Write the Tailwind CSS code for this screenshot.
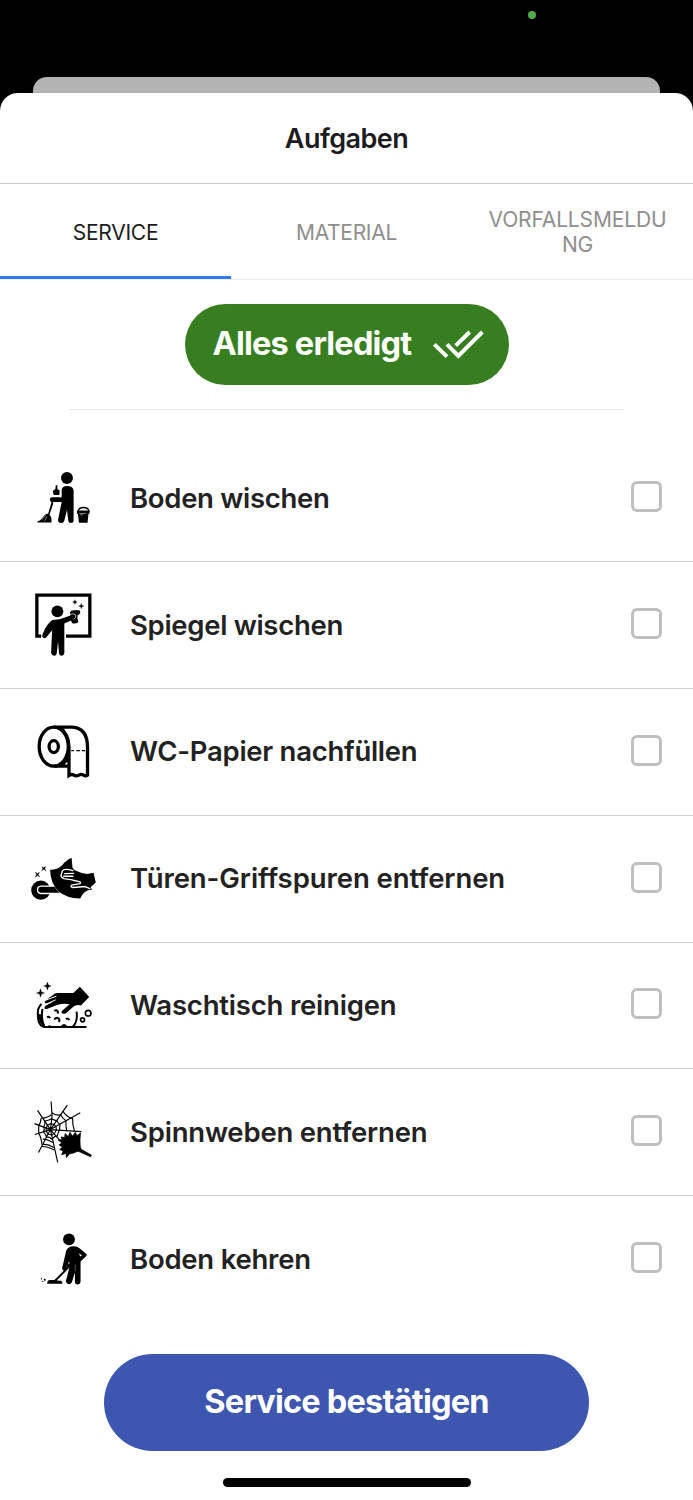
<!DOCTYPE html>
<html lang="de">
<head>
<meta charset="utf-8">
<title>Aufgaben</title>
<script src="https://cdn.jsdelivr.net/npm/@tailwindcss/browser@4"></script>
</head>
<body class="bg-black font-['Inter',sans-serif] text-[#1c1c1e]">
<div class="flex h-[1500px] w-[693px] flex-col overflow-hidden bg-black">
  <div class="flex h-[76.5px] shrink-0 items-start"><span class="mt-[11px] ml-[528px] size-2 rounded-full bg-[#4ea84e]"></span></div>
  <div class="mx-[33px] h-[16px] shrink-0 rounded-t-[14px] bg-[#b3b3b3]"></div>
  <div class="flex grow flex-col rounded-t-[18px] bg-white">
    <header class="flex h-[91.5px] shrink-0 items-center justify-center border-b border-[#cccccc] pt-[2px]"><h1 class="text-[27px] font-semibold tracking-[-0.55px]">Aufgaben</h1></header>
    <nav class="grid h-[96px] shrink-0 grid-cols-3 border-b border-[#eeeeee] text-center text-[21px] leading-[25px] text-[#8e8e8e]">
      <div class="flex items-center justify-center border-b-[3.5px] border-[#3478f0] pt-[4px] text-[#1c1c1e]"><span class="tracking-[-0.25px]">SERVICE</span></div>
      <div class="flex items-center justify-center pt-px"><span class="tracking-[-0.3px]">MATERIAL</span></div>
      <div class="flex items-center justify-center"><span class="tracking-[-0.15px]">VORFALLSMELDU<br>NG</span></div>
    </nav>
    <div class="mx-[69px] flex h-[130px] shrink-0 justify-center border-b-[1.5px] border-[#e8e8e8] pt-[23.5px]">
      <button class="flex h-[81px] w-[324px] items-center rounded-full bg-[#377e20] pl-[28px] text-white">
        <span class="w-[219px] pt-px text-left text-[32.5px] font-bold tracking-[-0.8px] whitespace-nowrap">Alles erledigt</span>
        <svg class="h-[32px] w-[52px]" viewBox="0 0 156 96" fill="none" stroke="currentColor" stroke-width="12"><path d="M7 49 45 86M45 49 79 84 151 12M71 53 113 12"/></svg>
      </button>
    </div>
    <ul class="mt-[25.5px] flex shrink-0 flex-col text-[27.5px] font-semibold text-[#222222]">
      <li class="flex h-[126.75px] items-center border-b border-[#d0d0d0] pr-[31px] pl-5">
        <svg class="h-[126px] w-[90px]" viewBox="0 -76 270 380.5" fill="#000">
          <circle cx="141" cy="54" r="18"/>
          <path d="M125 89q2-11 16-11 17 0 20 12v94q-1 6-8 6t-8-6l-4-34-8 32q-2 8-9 8-11-1-10-10l11-54H99v7L88 165q8 6 6 23H51q1-6 8-6l16-17q4-4 9-3l10-34q-6-6-4-12 2-4 8-4h27z"/>
          <path d="M107 76h5v10l7 6-1 13h-17l-3-12 8-6z"/>
          <path d="M64 181l13-15M73 184l7-14" stroke="#fff" stroke-width="1.5"/>
          <path d="M174 156q2-13 17-13t17 13" fill="none" stroke="#000" stroke-width="4"/>
          <path d="M171 152h38v10h-3l-3 27h-26l-3-27h-3z"/><path d="M178 161h21M181 165h8" stroke="#fff" stroke-width="1.5"/>
        </svg>
        <span class="ml-5 tracking-[-0.3px]">Boden wischen</span><span class="mb-[3px] ml-auto size-[31px] rounded-[6px] border-3 border-[#bfbfbf]"></span>
      </li>
      <li class="flex h-[126.75px] items-center border-b border-[#d0d0d0] pr-[31px] pl-5">
        <svg class="h-[126px] w-[90px]" viewBox="0 -62 270 380.5" fill="#000">
          <path d="M63 162H50V38h160v124h-72" fill="none" stroke="#000" stroke-width="10"/>
          <circle cx="112" cy="87" r="18"/>
          <path d="M150 90q2-6 12-6h16q5 3 2 10l-7 5q-2 7 2 20-2 6-18 4l-5-10z"/>
          <path d="M97 113l22-2 39-14q9-1 9 6 0 5-5 8l-29 13v89q-1 8-8 8t-8-7l-3-36-4 36q-1 7-8 7t-9-8l3-69-16 20q-5 6-11 3-5-4-2-10 13-34 30-44z"/>
          <path d="M149 97q12-6 18 1 3 9-6 13" fill="none" stroke="#fff" stroke-width="2"/>
          <path d="M165 52l2 5 5 2-5 2-2 5-2-5-5-2 5-2zM184 63l2 6 6 2-6 2-2 6-2-6-6-2 6-2z" stroke="#000"/>
        </svg>
        <span class="ml-5 tracking-[-0.3px]">Spiegel wischen</span><span class="mb-[3px] ml-auto size-[31px] rounded-[6px] border-3 border-[#bfbfbf]"></span>
      </li>
      <li class="flex h-[126.75px] items-center border-b border-[#d0d0d0] pr-[31px] pl-5">
        <svg class="h-[126px] w-[90px]" viewBox="0 -71 270 380.5" fill="none" stroke="#000" stroke-width="10">
          <ellipse cx="101" cy="103" rx="44" ry="59"/><ellipse cx="101" cy="103" rx="14" ry="18"/>
          <path d="M101 44h56q46 3 46 61v84q-6 4-12 0-7-4-14 0-8 5-15 0-7-4-15 1V103M121 47q24 17 26 56M101 162h46M126 158l21-22v26"/>
          <path d="M154 115h8M169 115h11M186 115h10" stroke-width="4"/>
        </svg>
        <span class="ml-5 tracking-[-0.28px]">WC-Papier nachfüllen</span><span class="mb-[3px] ml-auto size-[31px] rounded-[6px] border-3 border-[#bfbfbf]"></span>
      </li>
      <li class="flex h-[126.75px] items-center border-b border-[#d0d0d0] pr-[31px] pl-5">
        <svg class="h-[126px] w-[90px]" viewBox="0 -75 270 380.5" fill="#000">
          <circle cx="62" cy="149" r="29"/>
          <path d="M125 159H62q-10-1-10-11t10-11h48" fill="#000" stroke="#fff" stroke-width="4"/>
          <path d="M90 87q20 1 35-12 17-20 30-23l2 21q-1 10 8 16 20 10 37 11l19-4 7 30-16 14 5 7q-14 1-23 8-9 8-13 19-42-1-66-22Q91 128 90 87z" stroke="#fff" stroke-width="3" paint-order="stroke"/>
          <path d="M159 90q-27-8-32 1l-4 13q0 7 9 10l25 4M134 99l27-1M131 107l28 0M210 144l-14-6-37 3q-9-2-4-7l25-5q5-4-2-6l-19-4" fill="none" stroke="#fff" stroke-width="4" stroke-linecap="round" stroke-linejoin="round"/>
          <path d="M45 95l6 4 7-4-4 7 5 7-7-4-7 5 4-8zM65 78l5 3 7-4-3 6 3 7-6-4-7 4 4-6z" stroke="#000"/>
        </svg>
        <span class="ml-5 tracking-[-0.08px]">Türen-Griffspuren entfernen</span><span class="mb-[3px] ml-auto size-[31px] rounded-[6px] border-3 border-[#bfbfbf]"></span>
      </li>
      <li class="flex h-[126.75px] items-center border-b border-[#d0d0d0] pr-[31px] pl-5">
        <svg class="h-[126px] w-[90px]" viewBox="0 -78 270 380.5" fill="#000">
          <path d="M61 63l3 10 9 3-9 3-3 10-3-10-9-3 9-3zM82 43l3 9 8 3-8 3-3 9-3-9-8-3 8-3z" stroke="#000"/>
          <path d="M64 109q-13 13-11 33 0 37 25 37h122M67 124q-5 32 5 52M170 132q4 31-11 45" fill="none" stroke="#000" stroke-width="6"/>
          <path d="M53 139q3 32 22 41l-3-12q-8-12-8-27zM80 179q9-11 17 0zM120 179q12-18 24 0z"/>
          <path d="M180 57l28 31-25 26q-12-5-22 3l-23 20q-9 4-13-1-3-5 4-9l20-17q-18-4-38 2l-31 12q-6 2-7-3 0-4 5-7l22-12-22 6q-6 0-4-6 10-11 24-19 5-7 14-7h48z"/>
          <path d="M76 98l32-12M78 110l28-13" stroke="#fff" stroke-width="3" stroke-linecap="round"/>
          <g fill="none" stroke="#000" stroke-width="6"><path d="M103 131q4-5 9-1 3 4 0 8M81 150q5-6 9 2M103 156q5-8 13-3 4 5 0 10M138 155q6-5 10 3"/></g>
          <g fill="none" stroke="#000" stroke-width="5"><circle cx="205" cy="137" r="8.5"/><circle cx="188" cy="157" r="6"/></g>
        </svg>
        <span class="ml-5 tracking-[-0.2px]">Waschtisch reinigen</span><span class="mb-[3px] ml-auto size-[31px] rounded-[6px] border-3 border-[#bfbfbf]"></span>
      </li>
      <li class="flex h-[126.75px] items-center border-b border-[#d0d0d0] pr-[31px] pl-5">
        <svg class="h-[126px] w-[90px]" viewBox="0 -64 270 380.5" fill="none" stroke="#000" stroke-width="3.5">
          <path d="M93 34l3 43-5 42M142 45l-51 74M181 68l-90 51M52 61l39 58M43 101l48 18M44 134l47-15M55 188l36-69M113 218L91 119M91 119l94 6M91 119l30 35"/>
          <path d="M82 105l11-4 10 3 5 8 1 8-5 9-8 6-11-2-6-8-1-9zM74 93q10-2 21-7 8 5 16 6 2 7 9 12-2 8-1 16-6 8-7 18-9 0-16 10-8-7-17-7-1-8-9-15 4-7 1-16 5-6 3-17zM95 68q14 10 27 6 5 11 16 18-1 9 2 32M128 62q10 18 30 24-1 20 6 38M68 148q12 0 30 10M66 164q17-3 35 9M66 170q19 0 36 11M66 84q12 1 28-10M63 83q-1 16-7 23-1 14 0 25 6 8 10 34"/>
          <path d="M123 141l11 2 1-12 10 9 5-13 8 12 8-12 5 10 11-8q-3 23-1 39 0 6 4 11l30 17-3 5-33-15q-5-2-9 0-12 6-21 6l-10 12-1-13-13 4 4-11-10-5 8-7-10-7 9-6-11-8 11-3z" fill="#000" stroke="#000" stroke-width="2"/>
        </svg>
        <span class="ml-5 tracking-[-0.2px]">Spinnweben entfernen</span><span class="mb-[3px] ml-auto size-[31px] rounded-[6px] border-3 border-[#bfbfbf]"></span>
      </li>
      <li class="flex h-[126.75px] items-center pr-[31px] pl-5">
        <svg class="h-[126px] w-[90px]" viewBox="0 -73 270 380.5" fill="#000">
          <circle cx="147" cy="58" r="18"/>
          <path d="M139 91q8-13 22-12 11 0 18 6l19 16q5 4 0 9l-16 15v60q-1 9-9 9t-8-8v-28l-9 29q-3 8-11 6-8-2-7-10l10-39-38 38 13 1q5 3 4 9H81q0-9 6-11h16l28-28q-6-4-4-11z"/>
          <path d="M177 101l9 5-5 4zM145 127l5 1-4 6z" fill="#fff"/><path d="M146 145l-5-6M165 154l1-20" stroke="#fff" stroke-width="1"/>
          <circle cx="74" cy="180" r="3"/><circle cx="64" cy="177" r="2"/><circle cx="68" cy="185" r="2"/>
        </svg>
        <span class="ml-5 tracking-[-0.23px]">Boden kehren</span><span class="mb-[3px] ml-auto size-[31px] rounded-[6px] border-3 border-[#bfbfbf]"></span>
      </li>
    </ul>
    <button class="mx-auto mt-[31.2px] flex h-[97px] w-[485.5px] shrink-0 items-center justify-center rounded-full bg-[#3d56b0] text-[32.5px] font-bold text-white"><span class="tracking-[-0.8px]">Service bestätigen</span></button>
    <div class="mx-auto mt-[27.5px] h-[8.5px] w-[248px] shrink-0 rounded-full bg-black"></div>
  </div>
</div>
</body>
</html>
